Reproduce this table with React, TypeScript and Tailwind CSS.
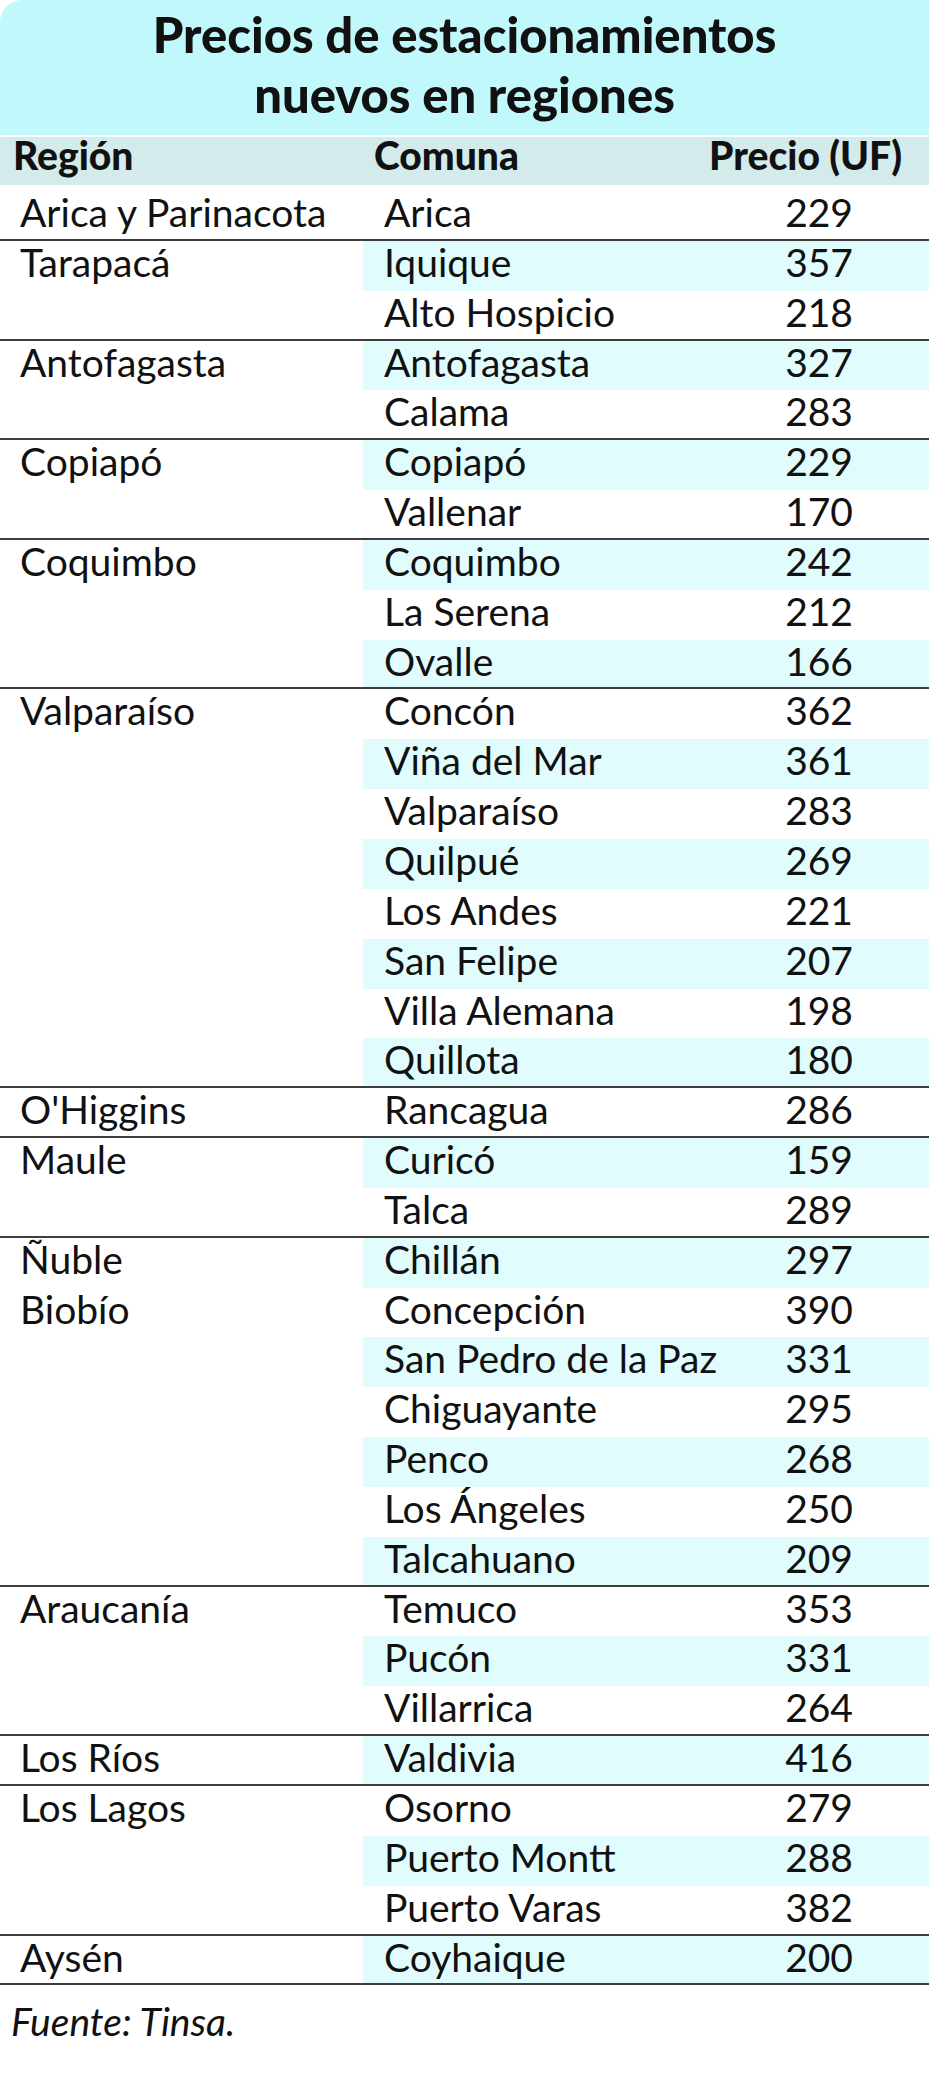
interface Row {
	region?: string;
	comuna: string;
	precio: number;
	divider?: boolean;
}

const rows: Row[] = [
	{ region: "Arica y Parinacota", comuna: "Arica", precio: 229, divider: true },
	{ region: "Tarapacá", comuna: "Iquique", precio: 357 },
	{ comuna: "Alto Hospicio", precio: 218, divider: true },
	{ region: "Antofagasta", comuna: "Antofagasta", precio: 327 },
	{ comuna: "Calama", precio: 283, divider: true },
	{ region: "Copiapó", comuna: "Copiapó", precio: 229 },
	{ comuna: "Vallenar", precio: 170, divider: true },
	{ region: "Coquimbo", comuna: "Coquimbo", precio: 242 },
	{ comuna: "La Serena", precio: 212 },
	{ comuna: "Ovalle", precio: 166, divider: true },
	{ region: "Valparaíso", comuna: "Concón", precio: 362 },
	{ comuna: "Viña del Mar", precio: 361 },
	{ comuna: "Valparaíso", precio: 283 },
	{ comuna: "Quilpué", precio: 269 },
	{ comuna: "Los Andes", precio: 221 },
	{ comuna: "San Felipe", precio: 207 },
	{ comuna: "Villa Alemana", precio: 198 },
	{ comuna: "Quillota", precio: 180, divider: true },
	{ region: "O'Higgins", comuna: "Rancagua", precio: 286, divider: true },
	{ region: "Maule", comuna: "Curicó", precio: 159 },
	{ comuna: "Talca", precio: 289, divider: true },
	{ region: "Ñuble", comuna: "Chillán", precio: 297 },
	{ region: "Biobío", comuna: "Concepción", precio: 390 },
	{ comuna: "San Pedro de la Paz", precio: 331 },
	{ comuna: "Chiguayante", precio: 295 },
	{ comuna: "Penco", precio: 268 },
	{ comuna: "Los Ángeles", precio: 250 },
	{ comuna: "Talcahuano", precio: 209, divider: true },
	{ region: "Araucanía", comuna: "Temuco", precio: 353 },
	{ comuna: "Pucón", precio: 331 },
	{ comuna: "Villarrica", precio: 264, divider: true },
	{ region: "Los Ríos", comuna: "Valdivia", precio: 416, divider: true },
	{ region: "Los Lagos", comuna: "Osorno", precio: 279 },
	{ comuna: "Puerto Montt", precio: 288 },
	{ comuna: "Puerto Varas", precio: 382, divider: true },
	{ region: "Aysén", comuna: "Coyhaique", precio: 200, divider: true }
];

export default function App() {
	return (
		<div className="w-[929px] min-h-[2096px] bg-white font-['Lato',sans-serif] text-[#111]">
			{/* Title */}
			<div className="h-[135px] rounded-tl-[22px] bg-[#c0f8fb] pt-[4px] text-center text-[49px] font-black leading-[60px]">
				<div>Precios de estacionamientos</div>
				<div>nuevos en regiones</div>
			</div>

			{/* Column headers */}
			<div className="mt-[2px] flex h-[48px] bg-[#d4ebeb] text-[39px] font-black leading-[36px]">
				<div className="w-[363px] pl-[13px]">Región</div>
				<div className="flex flex-1 justify-between pl-[11px] pr-[27px]">
					<span>Comuna</span>
					<span>Precio (UF)</span>
				</div>
			</div>

			{/* Rows */}
			<div className="mt-[6px] text-[39px] leading-[42px]">
				{rows.map((row, i) => (
					<div
						key={row.comuna}
						className={`flex h-[49.85px] ${row.divider ? "border-b-2 border-[#3d3d3d]" : ""}`}>
						<div className="w-[363px] pl-[20px] whitespace-nowrap">{row.region}</div>
						<div className={`flex flex-1 justify-between pl-[21px] pr-[76px] ${i % 2 === 1 ? "bg-[#e0fcfd]" : ""}`}>
							<span>{row.comuna}</span>
							<span>{row.precio}</span>
						</div>
					</div>
				))}
			</div>

			{/* Source */}
			<div className="mt-[15px] pl-[11px] text-[39px] italic leading-[42px]">Fuente: Tinsa.</div>
		</div>
	);
}
